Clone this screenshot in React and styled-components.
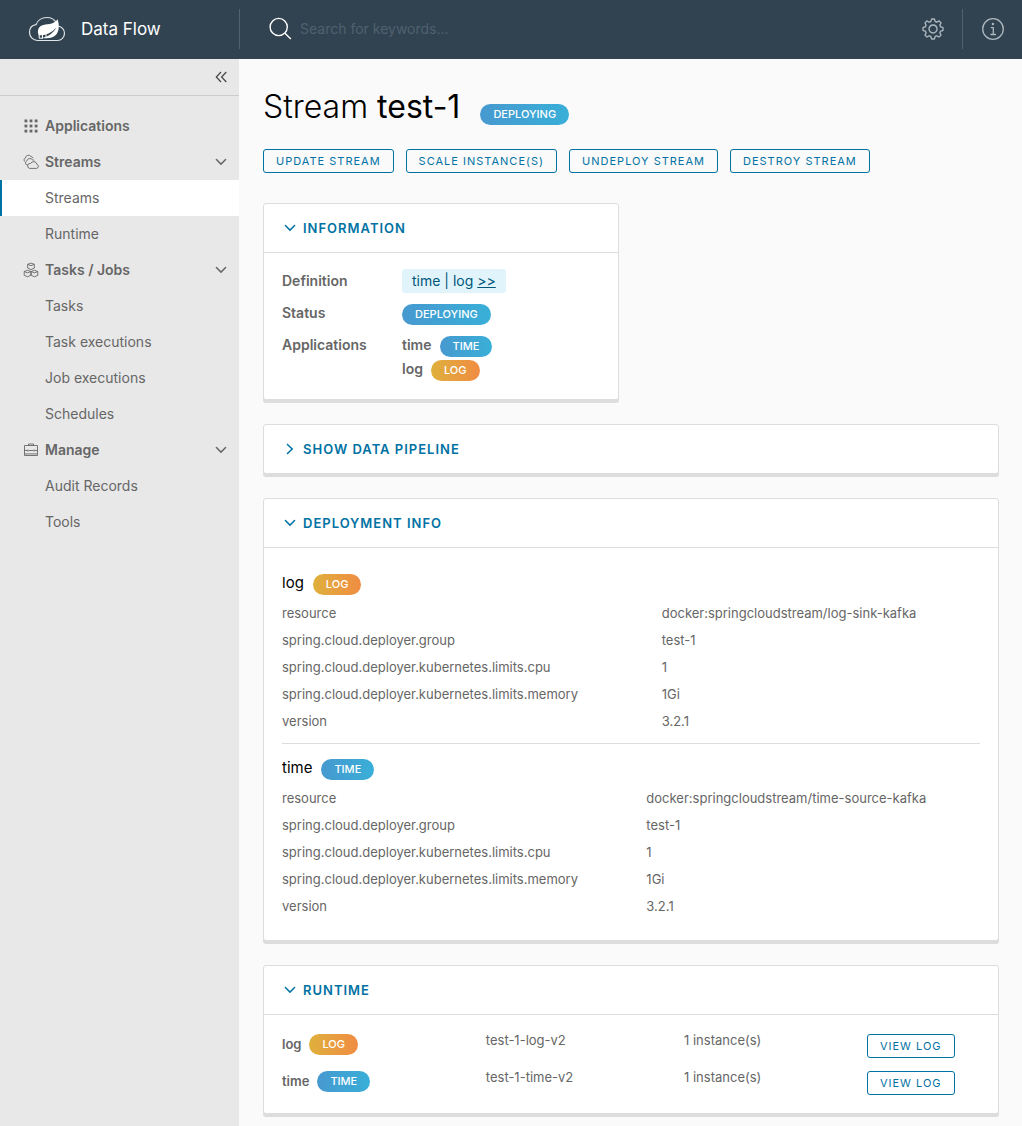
import React from 'react';
import styled, { createGlobalStyle } from 'styled-components';

const GlobalStyle = createGlobalStyle`
  *, *::before, *::after { box-sizing: border-box; }
  body {
    margin: 0;
    background: #fafafa;
    color: #666;
    font-family: Inter, "Open Sans", sans-serif;
    font-size: 14px;
    line-height: 24px;
  }
  a { color: inherit; text-decoration: none; }
  button, input { font-family: inherit; }
`;

const Page = styled.div`
  display: flex;
  flex-direction: column;
  min-height: 100vh;
`;

const Header = styled.header`
  display: flex;
  align-items: center;
  height: 59px;
  padding-bottom: 2px;
  background: #314351;
  color: #fff;
`;

const Brand = styled.a`
  display: flex;
  align-items: center;
  gap: 15px;
  width: 239px;
  padding-left: 28px;
  font-size: 17px;
`;

const Divider = styled.span`
  width: 1px;
  height: 40px;
  background: #50626e;
`;

const Search = styled.label`
  display: flex;
  flex: 1;
  align-items: center;
  gap: 8px;
  padding-left: 28px;
`;

const SearchInput = styled.input`
  flex: 1;
  min-width: 0;
  padding: 0;
  border: 0;
  outline: 0;
  background: transparent;
  color: #fff;
  font-size: 14px;
  line-height: 24px;
  &::placeholder { color: #4e616d; opacity: 1; }
`;

const HeaderButton = styled.button`
  display: flex;
  align-items: center;
  justify-content: center;
  width: 59px;
  height: 57px;
  padding: 0;
  border: 0;
  background: none;
  color: #adb7be;
`;

const Body = styled.div`
  display: flex;
  flex: 1;
`;

const Sidebar = styled.nav`
  flex: 0 0 239px;
  background: #e8e8e8;
`;

const CollapseBar = styled.div`
  display: flex;
  align-items: center;
  justify-content: flex-end;
  height: 37px;
  padding-right: 10px;
  border-bottom: 1px solid #ccc;
`;

const PlainButton = styled.button`
  display: flex;
  padding: 0;
  border: 0;
  background: none;
  color: #454545;
`;

const NavList = styled.ul`
  margin: 0;
  padding: 12px 0;
  list-style: none;
`;

const SubList = styled.ul`
  margin: 0;
  padding: 0;
  list-style: none;
`;

const NavGroup = styled.a`
  display: flex;
  align-items: center;
  gap: 6px;
  height: 36px;
  padding: 0 10px 0 23px;
  font-weight: 600;
  svg:last-child:not(:first-child) { margin-left: auto; }
`;

const NavItem = styled.a`
  display: block;
  padding: 6px 0 6px 43px;
  border-left: 2px solid ${(p) => (p.$active ? '#0072a3' : 'transparent')};
  background: ${(p) => (p.$active ? '#fff' : 'transparent')};
`;

const Main = styled.main`
  flex: 1;
  min-width: 0;
  padding: 24px 23px 12px 24px;
`;

const TitleRow = styled.div`
  display: flex;
  align-items: flex-end;
  gap: 20px;
  padding: 6px 0 24px;
`;

const Title = styled.h1`
  margin: 0;
  color: #000;
  font-size: 32px;
  font-weight: 300;
  line-height: 36px;
  strong { font-weight: 400; }
`;

const Badge = styled.span`
  display: inline-block;
  padding: 0 13px;
  border-radius: 11px;
  background: ${(p) =>
    p.$tone === 'orange'
      ? 'linear-gradient(90deg, #dfb03c, #f08c43)'
      : 'linear-gradient(90deg, #4799cf, #39afd8)'};
  color: #fff;
  font-size: 11px;
  font-weight: 500;
  line-height: 21px;
  text-transform: uppercase;
`;

const Actions = styled.div`
  display: flex;
  flex-wrap: wrap;
  gap: 12px;
  margin-bottom: 30px;
`;

const OutlineButton = styled.button`
  height: 24px;
  padding: 0 12px;
  border: 1px solid #0072a3;
  border-radius: 3px;
  background: transparent;
  color: #0072a3;
  font-size: 11px;
  font-weight: 400;
  letter-spacing: 1px;
  line-height: 22px;
  text-transform: uppercase;
  white-space: nowrap;
`;

const Card = styled.section`
  width: ${(p) => (p.$half ? 'calc(50% - 12px)' : '100%')};
  margin-bottom: 24px;
  border: 1px solid #ddd;
  border-radius: 3px;
  background: #fff;
  box-shadow: 0 3px 0 #ddd;
`;

const CardTitle = styled.h2`
  margin: 0;
  border-bottom: ${(p) => (p.$open ? '1px solid #ddd' : '0')};
`;

const CardToggle = styled.button`
  display: flex;
  align-items: center;
  gap: 5px;
  width: 100%;
  height: 48px;
  padding: 0 18px;
  border: 0;
  background: none;
  color: #0072a3;
  font-size: 13px;
  font-weight: 600;
  letter-spacing: 1px;
  text-transform: uppercase;
`;

const InfoList = styled.dl`
  display: grid;
  grid-template-columns: 120px 1fr;
  row-gap: 8px;
  margin: 0;
  padding: 16px 18px 18px;
  font-weight: 600;
  dd { margin: 0; }
`;

const Chip = styled.span`
  display: inline-block;
  padding: 0 10px;
  border-radius: 3px;
  background: #e1f4fc;
  color: #00567a;
  font-weight: 400;
  a { text-decoration: underline; }
`;

const Tagged = styled.div`
  display: flex;
  align-items: flex-end;
  gap: 8px;
  min-height: 1lh;
`;

const DeployBody = styled.div`
  padding: 11px 18px 20px;
`;

const DeployGroup = styled.section`
  padding-top: 12px;
  & + & {
    margin-top: 8px;
    border-top: 1px solid #ddd;
  }
`;

const GroupTitle = styled.h3`
  display: flex;
  align-items: flex-end;
  gap: 9px;
  margin: 0 0 5px;
  color: #000;
  font-size: 15px;
  font-weight: 400;
`;

const PropTable = styled.table`
  width: 100%;
  border-collapse: collapse;
  font-size: 13px;
  line-height: 27px;
  th, td { padding: 0; font-weight: 400; text-align: left; }
  th { width: ${(p) => p.$labelWidth}; }
`;

const RuntimeTable = styled.table`
  width: calc(100% - 36px);
  margin: 12px 18px;
  border-collapse: collapse;
  table-layout: fixed;
  font-size: 13px;
  th, td {
    height: 37px;
    padding: 7px 0 0;
    text-align: left;
    vertical-align: top;
    line-height: 12px;
  }
  th { width: 29.2%; font-weight: 600; line-height: 21px; }
  td:nth-child(2) { width: 28.4%; }
  td:nth-child(3) { width: 26.2%; }
`;

function Angle({ rotate = 0, size = 16 }) {
  return (
    <svg width={size} height={size} viewBox="0 0 36 36" fill="currentColor" aria-hidden="true">
      <path
        transform={`rotate(${rotate} 18 18)`}
        d="M29.52,22.52,18,10.6,6.48,22.52a1.7,1.7,0,0,0,2.45,2.36L18,15.49l9.08,9.39a1.7,1.7,0,0,0,2.45-2.36Z"
      />
    </svg>
  );
}

function Logo() {
  return (
    <svg width="38" height="26" viewBox="0 0 38 26" aria-hidden="true">
      <path
        d="M9.5 24.5A8 8 0 0 1 1.5 16.6C1.5 12 4.4 9.2 8 8.7C9.5 4.2 14 1.5 18.8 1.5C23.2 1.5 26.6 3.5 28.4 7C29 8.1 29.4 9 29.6 10C33.7 10.3 36.5 13.6 36.5 17.2C36.5 21.4 33.4 24.5 29.4 24.5Z"
        fill="none"
        stroke="#dfe4e7"
        strokeWidth="1.2"
      />
      <path
        d="M29.6 3.2C31.7 9.6 31 15.7 27.8 19C24.8 22.2 20.2 22.5 14.2 22C20.6 20.3 25.4 16.7 28.3 11.4C23.8 16.6 18.2 19.2 10.8 19.4C9.1 15.8 9.8 11.4 13.8 9.5C17.8 7.5 25.5 9.5 29.6 3.2Z"
        fill="#fff"
      />
      <path
        d="M11.2 19v3M14.5 18.8v3.3M18 18v3.5M11 22.2h4M20 20.8l3-1"
        stroke="#fff"
        strokeWidth="1"
        fill="none"
      />
      <circle cx="12.7" cy="20.6" r=".7" fill="#314351" />
      <circle cx="16.5" cy="20.4" r=".7" fill="#314351" />
    </svg>
  );
}

function SearchIcon() {
  return (
    <svg width="24" height="24" viewBox="0 0 24 24" fill="none" stroke="#fff" strokeWidth="1.4" aria-hidden="true">
      <circle cx="10.7" cy="10" r="8.6" />
      <path d="M17 16.2l5.8 5.9" />
    </svg>
  );
}

function Cog() {
  return (
    <svg width="24" height="24" viewBox="0 0 36 36" fill="currentColor" aria-hidden="true">
      <path d="M18.1,11c-3.9,0-7,3.1-7,7s3.1,7,7,7c3.9,0,7-3.1,7-7S22,11,18.1,11z M18.1,23c-2.8,0-5-2.2-5-5s2.2-5,5-5c2.8,0,5,2.2,5,5S20.9,23,18.1,23z" />
      <path d="M32.8,14.7L30,13.8l-0.6-1.5l1.4-2.6c0.3-0.6,0.2-1.4-0.3-1.9l-2.4-2.4c-0.5-0.5-1.3-0.6-1.9-0.3l-2.6,1.4l-1.5-0.6l-0.9-2.8C21,2.5,20.4,2,19.7,2h-3.4c-0.7,0-1.3,0.5-1.4,1.2L14,6c-0.6,0.1-1.1,0.3-1.6,0.6L9.8,5.2C9.2,4.9,8.4,5,7.9,5.5L5.5,7.9C5,8.4,4.9,9.2,5.2,9.8l1.3,2.5c-0.2,0.5-0.4,1.1-0.6,1.6l-2.8,0.9C2.5,15,2,15.6,2,16.3v3.4c0,0.7,0.5,1.3,1.2,1.5L6,22.1l0.6,1.5l-1.4,2.6c-0.3,0.6-0.2,1.4,0.3,1.9l2.4,2.4c0.5,0.5,1.3,0.6,1.9,0.3l2.6-1.4l1.5,0.6l0.9,2.9c0.2,0.6,0.8,1.1,1.5,1.1h3.4c0.7,0,1.3-0.5,1.5-1.1l0.9-2.9l1.5-0.6l2.6,1.4c0.6,0.3,1.4,0.2,1.9-0.3l2.4-2.4c0.5-0.5,0.6-1.3,0.3-1.9l-1.4-2.6l0.6-1.5l2.9-0.9c0.6-0.2,1.1-0.8,1.1-1.5v-3.4C34,15.6,33.5,14.9,32.8,14.7z M32,19.4l-3.6,1.1L28.3,21c-0.3,0.7-0.6,1.4-0.9,2.1l-0.3,0.5l1.8,3.3l-2,2l-3.3-1.8l-0.5,0.3c-0.7,0.4-1.4,0.7-2.1,0.9l-0.5,0.1L19.4,32h-2.8l-1.1-3.6L15,28.3c-0.7-0.3-1.4-0.6-2.1-0.9l-0.5-0.3l-3.3,1.8l-2-2l1.8-3.3l-0.3-0.5c-0.4-0.7-0.7-1.4-0.9-2.1l-0.1-0.5L4,19.4v-2.8l3.4-1l0.2-0.5c0.2-0.8,0.5-1.5,0.9-2.2l0.3-0.5L7.1,9.1l2-2l3.2,1.8l0.5-0.3c0.7-0.4,1.4-0.7,2.2-0.9l0.5-0.2L16.6,4h2.8l1.1,3.5L21,7.7c0.7,0.2,1.4,0.5,2.1,0.9l0.5,0.3l3.3-1.8l2,2l-1.8,3.3l0.3,0.5c0.4,0.7,0.7,1.4,0.9,2.1l0.1,0.5l3.6,1.1V19.4z" />
    </svg>
  );
}

function InfoIcon() {
  return (
    <svg width="24" height="24" viewBox="0 0 24 24" fill="none" stroke="currentColor" strokeWidth="1.3" aria-hidden="true">
      <circle cx="12" cy="12" r="10.3" />
      <circle cx="11.9" cy="7" r="1.2" fill="currentColor" stroke="none" />
      <path d="M9.8 10.6h2.5v7M9.4 17.5h5.6" />
    </svg>
  );
}

function GridIcon() {
  return (
    <svg width="16" height="16" viewBox="0 0 16 16" fill="currentColor" aria-hidden="true">
      {[1.5, 6.6, 11.7].map((y) =>
        [1.5, 6.6, 11.7].map((x) => <rect key={`${x}-${y}`} x={x} y={y} width="2.8" height="2.8" />)
      )}
    </svg>
  );
}

function CloudsIcon() {
  return (
    <svg width="16" height="16" viewBox="0 0 16 16" fill="none" stroke="currentColor" strokeWidth=".9" aria-hidden="true">
      <path d="M6.6 14.4h6.8a2.1 2.1 0 0 0 .5-4.1a3.3 3.3 0 0 0-6.2-.8a2.5 2.5 0 0 0-1.1 4.9z" />
      <path d="M5 10.9H3.9a1.9 1.9 0 0 1-.3-3.6a3.3 3.3 0 0 1 5.9-1.5a2.5 2.5 0 0 1 1.9 1" />
      <path d="M2.1 7.6a1.8 1.8 0 0 1 .2-3.4a3.2 3.2 0 0 1 5.7-1.7a2.3 2.3 0 0 1 2 1.7" />
    </svg>
  );
}

function BlocksIcon() {
  const block = 'M0 1.5l3.300-1.200l3.300 1.200v3.800l-3.300 1.500l-3.300-1.500zM0 1.500l3.300 1.400l3.300-1.400';
  return (
    <svg width="16" height="16" viewBox="0 0 16 16" fill="none" stroke="currentColor" strokeWidth=".9" strokeLinejoin="round" aria-hidden="true">
      <path transform="translate(4.700 .8)" d={block} />
      <path transform="translate(1.200 8)" d={block} />
      <path transform="translate(8.200 8)" d={block} />
    </svg>
  );
}

function CaseIcon() {
  return (
    <svg width="16" height="16" viewBox="0 0 16 16" fill="none" stroke="currentColor" strokeWidth=".9" aria-hidden="true">
      <path d="M1.500 3.500h13v10h-13zM5.500 3.500v-1.500h5v1.500M1.500 8.500h3M5.500 8.500h5M11.500 8.500h3M4.900 7.500v2M11.100 7.500v2M1.500 11.900h13" />
    </svg>
  );
}

const NAV = [
  { label: 'Applications', Icon: GridIcon },
  { label: 'Streams', Icon: CloudsIcon, items: ['Streams', 'Runtime'], active: 'Streams' },
  { label: 'Tasks / Jobs', Icon: BlocksIcon, items: ['Tasks', 'Task executions', 'Job executions', 'Schedules'] },
  { label: 'Manage', Icon: CaseIcon, items: ['Audit Records', 'Tools'] },
];

const propsFor = (image) => [
  ['resource', `docker:springcloudstream/${image}`],
  ['spring.cloud.deployer.group', 'test-1'],
  ['spring.cloud.deployer.kubernetes.limits.cpu', '1'],
  ['spring.cloud.deployer.kubernetes.limits.memory', '1Gi'],
  ['version', '3.2.1'],
];

const DEPLOYMENTS = [
  { name: 'log', tone: 'orange', labelWidth: '54.4%', rows: propsFor('log-sink-kafka') },
  { name: 'time', tone: 'blue', labelWidth: '52.2%', rows: propsFor('time-source-kafka') },
];

const RUNTIMES = [
  { name: 'log', tone: 'orange', id: 'test-1-log-v2' },
  { name: 'time', tone: 'blue', id: 'test-1-time-v2' },
];

function Panel({ title, open = true, half, children }) {
  return (
    <Card $half={half}>
      <CardTitle $open={open}>
        <CardToggle type="button" aria-expanded={open}>
          <Angle rotate={open ? 180 : 90} />
          {title}
        </CardToggle>
      </CardTitle>
      {children}
    </Card>
  );
}

export default function App() {
  return (
    <Page>
      <GlobalStyle />
      <Header>
        <Brand href="#">
          <Logo />
          Data Flow
        </Brand>
        <Divider />
        <Search>
          <SearchIcon />
          <SearchInput type="text" placeholder="Search for keywords..." aria-label="Search for keywords" />
        </Search>
        <HeaderButton type="button" aria-label="Settings"><Cog /></HeaderButton>
        <Divider />
        <HeaderButton type="button" aria-label="About"><InfoIcon /></HeaderButton>
      </Header>
      <Body>
        <Sidebar>
          <CollapseBar>
            <PlainButton type="button" aria-label="Collapse menu">
              <svg width="16" height="16" viewBox="0 0 16 16" fill="none" stroke="currentColor" strokeWidth="1.2" aria-hidden="true">
                <path d="M8 3L3.300 8l4.700 5M13.300 3L8.600 8l4.700 5" />
              </svg>
            </PlainButton>
          </CollapseBar>
          <NavList>
            {NAV.map(({ label, Icon, items, active }) => (
              <li key={label}>
                <NavGroup href="#">
                  <Icon />
                  {label}
                  {items && <Angle rotate={180} />}
                </NavGroup>
                {items && (
                  <SubList>
                    {items.map((item) => (
                      <li key={item}>
                        <NavItem href="#" $active={item === active}>{item}</NavItem>
                      </li>
                    ))}
                  </SubList>
                )}
              </li>
            ))}
          </NavList>
        </Sidebar>
        <Main>
          <TitleRow>
            <Title>Stream <strong>test-1</strong></Title>
            <Badge>Deploying</Badge>
          </TitleRow>
          <Actions>
            <OutlineButton type="button">Update stream</OutlineButton>
            <OutlineButton type="button">Scale instance(s)</OutlineButton>
            <OutlineButton type="button">Undeploy stream</OutlineButton>
            <OutlineButton type="button">Destroy stream</OutlineButton>
          </Actions>

          <Panel title="Information" half>
            <InfoList>
              <dt>Definition</dt>
              <dd><Chip>time | log <a href="#">&gt;&gt;</a></Chip></dd>
              <dt>Status</dt>
              <dd><Tagged><Badge>Deploying</Badge></Tagged></dd>
              <dt>Applications</dt>
              <dd>
                <Tagged>time <Badge>Time</Badge></Tagged>
                <Tagged>log <Badge $tone="orange">Log</Badge></Tagged>
              </dd>
            </InfoList>
          </Panel>

          <Panel title="Show data pipeline" open={false} />

          <Panel title="Deployment info">
            <DeployBody>
              {DEPLOYMENTS.map(({ name, tone, labelWidth, rows }) => (
                <DeployGroup key={name}>
                  <GroupTitle>{name} <Badge $tone={tone}>{name}</Badge></GroupTitle>
                  <PropTable $labelWidth={labelWidth}>
                    <tbody>
                      {rows.map(([key, value]) => (
                        <tr key={key}>
                          <th scope="row">{key}</th>
                          <td>{value}</td>
                        </tr>
                      ))}
                    </tbody>
                  </PropTable>
                </DeployGroup>
              ))}
            </DeployBody>
          </Panel>

          <Panel title="Runtime">
            <RuntimeTable>
              <tbody>
                {RUNTIMES.map(({ name, tone, id }) => (
                  <tr key={name}>
                    <th scope="row"><Tagged>{name} <Badge $tone={tone}>{name}</Badge></Tagged></th>
                    <td>{id}</td>
                    <td>1 instance(s)</td>
                    <td><OutlineButton type="button">View log</OutlineButton></td>
                  </tr>
                ))}
              </tbody>
            </RuntimeTable>
          </Panel>
        </Main>
      </Body>
    </Page>
  );
}
